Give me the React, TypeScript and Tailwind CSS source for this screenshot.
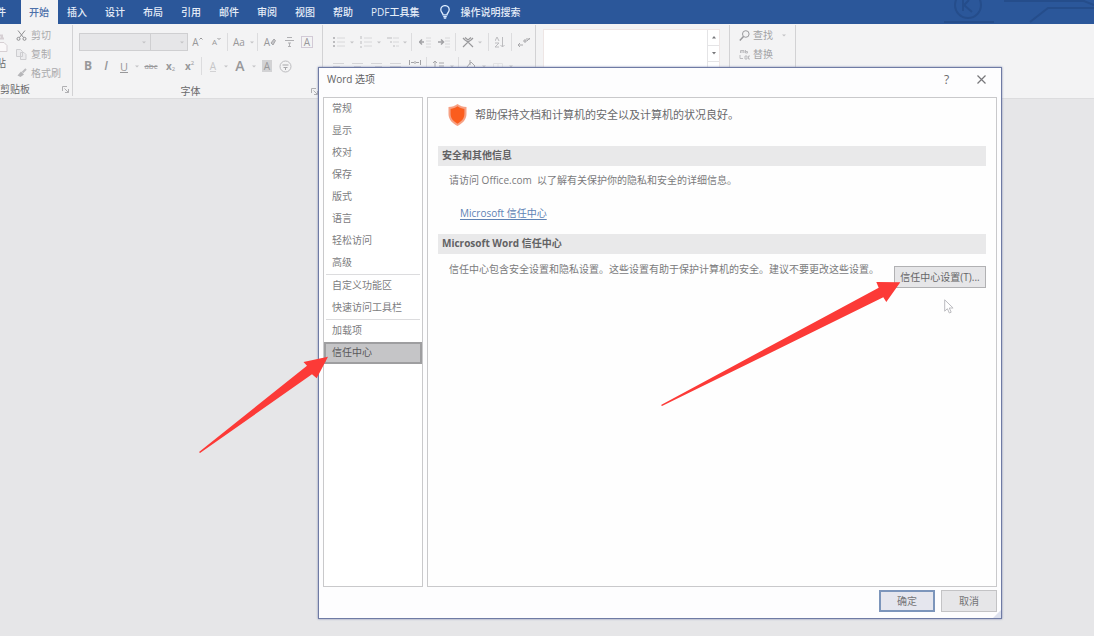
import { Fragment, type ReactNode } from "react";

const tabs = ["开始", "插入", "设计", "布局", "引用", "邮件", "审阅", "视图", "帮助", "PDF工具集"];

const categories = [
  ["常规", "显示", "校对", "保存", "版式", "语言", "轻松访问", "高级"],
  ["自定义功能区", "快速访问工具栏"],
  ["加载项", "信任中心"],
];

function Tool({ label, className = "w-[19px]", children }: { label: string; className?: string; children: ReactNode }) {
  return (
    <button type="button" aria-label={label} className={`flex h-[18px] shrink-0 items-center justify-center leading-none ${className}`}>
      {children}
    </button>
  );
}

function Caret({ className = "w-2" }: { className?: string }) {
  return (
    <span className={`flex h-[18px] shrink-0 items-center justify-center ${className}`}>
      <svg width="4" height="3" viewBox="0 0 4 3" fill="#c4c4c6"><path d="M0 .5h4L2 2.500z" /></svg>
    </span>
  );
}

function Rule({ className = "w-[5px]" }: { className?: string }) {
  return (
    <span className={`flex h-[18px] shrink-0 justify-center ${className}`}>
      <span className="w-px bg-[#dcdcde]" />
    </span>
  );
}

function Icon({ w = 12, h = 12, children }: { w?: number; h?: number; children: ReactNode }) {
  return (
    <svg width={w} height={h} viewBox={`0 0 ${w} ${h}`} fill="none" stroke="#bcbcbf" strokeWidth="1">
      {children}
    </svg>
  );
}

function TabBar() {
  return (
    <header className="relative flex h-6 items-stretch overflow-hidden bg-[#2b579a] text-[10px] font-medium text-[#e6edf8]">
      <svg className="absolute right-0 top-0" width="150" height="24" viewBox="0 0 150 24" fill="none" stroke="#254d8b" strokeWidth="2">
        <circle cx="24" cy="5" r="13" />
        <path d="M19 0v11M19 6l6-6M20 5l8 7M60 1h80l10 4M86 22l18-14h46M0 22h50" />
      </svg>
      <button type="button" className="-ml-1 w-[25px] pl-0 text-left">件</button>
      <nav className="flex">
        {tabs.map((tab, i) => (
          <button
            key={tab}
            type="button"
            className={i === 0 ? "bg-[#f3f3f4] pl-2 pr-[9px] text-[#4d70aa]" : "px-[9px]"}
          >
            {tab}
          </button>
        ))}
      </nav>
      <button type="button" className="ml-[11px] flex items-center gap-[9px]">
        <svg width="12" height="14" viewBox="0 0 12 14" fill="none" stroke="#dcecff" strokeWidth="1.3">
          <path d="M4 9.8C4 8 1.8 7.3 1.8 4.8a4.2 4.2 0 0 1 8.4 0C10.200 7.300 8 8 8 9.800zM4.200 11.600h3.600M4.800 13.200h2.400" />
        </svg>
        操作说明搜索
      </button>
    </header>
  );
}

function ClipboardGroup() {
  return (
    <section className="flex w-[73px] shrink-0 flex-col border-r border-[#d2d2d4]">
      <div className="flex h-[59px] pt-[1px]">
        <button type="button" aria-label="粘贴" className="-ml-1 flex w-5 flex-col items-start pt-2 text-[#6a6a6c]">
          <svg width="12" height="19" viewBox="0 0 12 19" fill="none" stroke="#d6cfd3">
            <path d="M2 4.500h6M2 1.500h4v3" strokeWidth="2" />
            <path d="M2 8.500h6l3 3v6H2" fill="#faf8f9" />
          </svg>
          <span className="mt-[2px] leading-4">贴</span>
        </button>
        <div className="flex flex-col text-[#aaaaac]">
          <button type="button" className="flex h-[19px] items-center gap-1">
            <Icon w={11} h={11}>
              <path d="M2 .5l5.500 7M9 .5L3.500 7.500" stroke="#8e8e91" />
              <circle cx="2.500" cy="8.800" r="1.500" stroke="#8e8e91" />
              <circle cx="8.500" cy="8.800" r="1.500" stroke="#8e8e91" />
            </Icon>
            剪切
          </button>
          <button type="button" className="flex h-[19px] items-center gap-1">
            <Icon w={11} h={11}>
              <path d="M.5.5h4l2 2v5h-6zM4.500 3.500h3.500l2 2v5h-5.500z" fill="#ebebed" stroke="#cdcdd0" />
            </Icon>
            复制
          </button>
          <button type="button" className="flex h-[18px] items-center gap-1">
            <Icon w={11} h={11}>
              <path d="M10 1L6.500 4.500" strokeWidth="2" />
              <path d="M5 3.500l3 3L4.500 9 1.500 7.500z" fill="#b6b6b9" stroke="none" />
            </Icon>
            格式刷
          </button>
        </div>
      </div>
      <div className="flex h-[14px] items-center justify-between pr-[3px] text-[#68686a]">
        剪贴板
        <Launcher />
      </div>
    </section>
  );
}

function Launcher() {
  return (
    <svg width="7" height="7" viewBox="0 0 7 7" fill="none" stroke="#b0b0b3">
      <path d="M.5 5V.5H5M2.500 2.500l4 4M6.500 3v3.500H3" />
    </svg>
  );
}

function FontGroup() {
  return (
    <section className="flex w-[250px] shrink-0 flex-col border-r border-[#d2d2d4] pl-[6px] pt-2 text-[#98989a]">
      <div className="flex items-center">
        <div className="relative flex">
          <select aria-label="字体" className="h-[18px] w-[72px] appearance-none border border-[#cfcfd1] bg-[#e6e6e8]" />
          <span className="absolute right-[3px]"><Caret /></span>
        </div>
        <div className="relative flex">
          <select aria-label="字号" className="h-[18px] w-[37px] appearance-none border border-l-0 border-[#cfcfd1] bg-[#e6e6e8]" />
          <span className="absolute right-[2px]"><Caret /></span>
        </div>
        <Tool label="增大字号">
          A<Icon w={4} h={10}><path d="M.5 2.500L2 1l1.500 1.500" stroke="#98989a" /></Icon>
        </Tool>
        <Tool label="减小字号">
          <span className="text-[8px]">A</span><Icon w={4} h={10}><path d="M.5 1L2 2.500 3.500 1" stroke="#98989a" /></Icon>
        </Tool>
        <Rule className="w-[3px]" />
        <Tool label="更改大小写" className="w-5">Aa</Tool>
        <Caret className="w-[6px]" />
        <Rule />
        <Tool label="清除格式" className="w-5">
          A<Icon w={6} h={8}><path d="M1 5l3-4 1.500 1.500L3 7z" fill="#c4c4c7" stroke="#a6a6a9" /></Icon>
        </Tool>
        <Tool label="拼音指南" className="w-[18px]">
          <Icon w={11} h={12}><path d="M1 4.500h9M3 1.500h5M4 7h3M5.500 7v3M4 10.500h3" stroke="#b0b0b3" /></Icon>
        </Tool>
        <Tool label="字符边框" className="w-[18px]">
          <span className="flex size-3 items-center justify-center border border-[#d2cad6]">A</span>
        </Tool>
      </div>
      <div className="mt-[6px] flex items-center">
        <Tool label="加粗" className="w-[18px] text-xs font-bold">B</Tool>
        <Tool label="倾斜" className="w-[18px] text-xs font-semibold italic">I</Tool>
        <Tool label="下划线" className="w-[18px] text-[11px] underline">U</Tool>
        <Caret />
        <Tool label="删除线" className="w-5 text-[8px] line-through">abc</Tool>
        <Tool label="下标"><b>x</b><span className="mt-[6px] text-[6px]">2</span></Tool>
        <Tool label="上标"><b>x</b><span className="mb-[6px] text-[6px]">2</span></Tool>
        <Rule />
        <Tool label="文本效果" className="w-[18px] text-[#c6c6c8]"><span className="border-b border-[#d2d2d4]">A</span></Tool>
        <Caret />
        <Tool label="字体颜色" className="w-5 text-sm font-semibold">A</Tool>
        <Caret />
        <Tool label="字符底纹" className="w-[18px]"><span className="bg-[#d2d2d4] px-[2px] py-px">A</span></Tool>
        <Tool label="带圈字符">
          <Icon w={13} h={13}><circle cx="6.500" cy="6.500" r="5.500" /><path d="M3.500 5h6M4.500 7.500h4M6.500 7.500v2.500" stroke="#a6a6a9" /></Icon>
        </Tool>
      </div>
      <div className="mt-[9px] flex h-[14px] items-center justify-between pr-1">
        <span className="w-[7px]" />
        <span className="-ml-4 text-[#68686a]">字体</span>
        <Launcher />
      </div>
    </section>
  );
}

function ParagraphGroup() {
  const align = [
    ["左对齐", "M0 1.500h11M0 4.500h7M0 7.500h11"],
    ["居中", "M0 1.500h11M2 4.500h7M0 7.500h11"],
    ["右对齐", "M0 1.500h11M4 4.500h7M0 7.500h11"],
    ["两端对齐", "M0 1.500h11M0 4.500h11M0 7.500h11"],
  ];
  return (
    <section className="flex w-[213px] shrink-0 flex-col border-r border-[#d2d2d4] pl-[6px] pt-2">
      <div className="flex items-center">
        <Tool label="项目符号"><Icon><path d="M0 2h2M0 6h2M0 10h2" strokeWidth="2" /><path d="M4 2h8M4 6h8M4 10h8" stroke="#d8d8da" /></Icon></Tool>
        <Caret />
        <Tool label="编号"><Icon><path d="M1 0v3M1 5v3M1 10v2" /><path d="M4 2h8M4 6h8M4 10h8" stroke="#d8d8da" /></Icon></Tool>
        <Caret />
        <Tool label="多级列表"><Icon><path d="M0 2h5M3 6h2M6 10h2" /><path d="M6 2h6M6 6h6M9 10h3" stroke="#d8d8da" /></Icon></Tool>
        <Caret className="w-[6px]" />
        <Rule className="w-[7px]" />
        <Tool label="减少缩进量"><Icon><path d="M0 6h5M3 3.500L.5 6 3 8.500" stroke="#a2a2a5" strokeWidth="1.500" /><path d="M7 2h5M7 5h5M7 8h5M7 11h5" stroke="#d8d8da" /></Icon></Tool>
        <Tool label="增加缩进量"><Icon><path d="M0 6h5M3 3.500L5.500 6 3 8.500" stroke="#a2a2a5" strokeWidth="1.500" /><path d="M7 2h5M7 5h5M7 8h5M7 11h5" stroke="#d8d8da" /></Icon></Tool>
        <Rule />
        <Tool label="中文版式"><Icon><path d="M1 11l5-5 5 5M3 4L1 2M9 4l2-2M3 1.500L6 4l3-2.500M3 4l3 2 3-2" stroke="#98989b" strokeWidth="1.200" /></Icon></Tool>
        <Caret className="w-[6px]" />
        <Rule className="w-[11px]" />
        <Tool label="排序" className="w-3"><Icon w={10}><path d="M0 5L2 1l2 4M0 7h4L0 11h4M7.500 1v10M5.500 9l2 2 2-2" /></Icon></Tool>
        <Rule className="w-[10px]" />
        <Tool label="显示编辑标记" className="w-4"><Icon><path d="M0 9h5M2 7L0 9l2 2M5 5h4M7 3v4M9 5l3-3M8 3h4" stroke="#a8a8ab" /></Icon></Tool>
      </div>
      <div className="mt-[6px] flex items-center">
        {align.map(([label, d]) => (
          <Tool key={label} label={label}><Icon h={9}><path d={d} stroke="#d4d4d7" /></Icon></Tool>
        ))}
        <Tool label="分散对齐"><Icon h={12}><path d="M.5 0v5M11.500 0v5M2 2.500h3M7 2.500h3M6 1v3M0 8h11" stroke="#a2a2a5" /></Icon></Tool>
        <Rule />
        <Tool label="行距"><Icon><path d="M2 1v10M0 3l2-2 2 2M6 3h5M6 6h5" stroke="#a8a8ab" /></Icon></Tool>
        <Caret />
        <Rule />
        <Tool label="底纹"><Icon><path d="M2 7l4-5 4 4-4 4zM5 0v5" stroke="#a8a8ab" /></Icon></Tool>
        <Caret />
        <Tool label="边框"><Icon><path d="M1.500 3.500h9v7h-9zM6 3v8" stroke="#e2e2e4" /></Icon></Tool>
        <Caret />
      </div>
    </section>
  );
}

function StylesGroup() {
  return (
    <section className="flex w-[194px] shrink-0 border-r border-[#d2d2d4] pl-[7px] pr-[9px] pt-1">
      <div className="flex flex-1 border border-[#eee6e5] bg-white">
        <div className="flex-1" />
        <div className="flex w-3 flex-col border-l border-[#e4e4e6]">
          <button type="button" aria-label="上一行" className="flex h-4 items-center justify-center border-b border-[#e4e4e6]">
            <svg width="4" height="3" viewBox="0 0 4 3" fill="#77777a"><path d="M0 2.500h4L2 0z" /></svg>
          </button>
          <button type="button" aria-label="下一行" className="flex h-4 items-center justify-center border-b border-[#e4e4e6]">
            <svg width="4" height="3" viewBox="0 0 4 3" fill="#77777a"><path d="M0 0h4L2 2.500z" /></svg>
          </button>
        </div>
      </div>
    </section>
  );
}

function EditingGroup() {
  return (
    <section className="flex w-[66px] shrink-0 flex-col border-r border-[#d2d2d4] pl-[9px] pt-px text-[#a2a2a4]">
      <button type="button" className="flex h-[19px] items-center gap-[3px]">
        <Icon w={11} h={11}><circle cx="6.800" cy="4" r="3.300" stroke="#99999c" /><path d="M4.500 6.500L.8 10.500" stroke="#99999c" strokeWidth="1.500" /></Icon>
        查找
        <Caret className="ml-1 w-2" />
      </button>
      <button type="button" className="flex h-[19px] items-center gap-[3px]">
        <Icon w={11} h={11}><path d="M1.500 4V1.500H5V4M1.500 3H5M6.500 1v3h2V2.500h-2M1 6v3.500h3M6 7h2v3H6zM11 7H9.500v3H11" /></Icon>
        替换
      </button>
    </section>
  );
}

function SectionTitle({ children }: { children: ReactNode }) {
  return <h2 className="flex h-5 items-center bg-[#e9e9ea] pb-px pl-1 text-[10px] font-bold text-[#626264]">{children}</h2>;
}

function OptionsDialog() {
  return (
    <div
      role="dialog"
      aria-labelledby="dialog-title"
      className="absolute bottom-[17px] left-[318px] right-[92px] top-[67px] flex flex-col border border-[#6f7ba4] bg-[#fdfdfe] px-1 pb-[6px] shadow-[0_0_2px_#7f8ab0]"
    >
      <div className="flex h-[29px] shrink-0 items-center pb-[6px] pl-1">
        <h1 id="dialog-title" className="flex-1 text-[10px] text-[#626264]">Word 选项</h1>
        <button type="button" aria-label="帮助" className="w-[37px] text-xs text-[#6a6a6c]">?</button>
        <button type="button" aria-label="关闭" className="flex w-8 justify-center">
          <svg width="9" height="9" viewBox="0 0 9 9" stroke="#77777b" strokeWidth="1.200"><path d="M.5.5l8 8M8.500.5l-8 8" /></svg>
        </button>
      </div>

      <div className="flex min-h-0 flex-1 gap-1">
        <nav className="flex w-[100px] shrink-0 flex-col border border-[#c9c9cb] bg-white">
          {categories.map((group, i) => (
            <Fragment key={group[0]}>
              {i > 0 && <hr className="mx-[2px] border-[#dcdcde]" />}
              {group.map((name) => (
                <button
                  key={name}
                  type="button"
                  className={
                    name === "信任中心"
                      ? "h-[22px] border-2 border-[#9e9ea0] bg-[#c5c5c7] pb-px pl-[6px] text-left text-[#58585a]"
                      : "h-[22px] pb-px pl-2 text-left text-[#7c7c7e]"
                  }
                >
                  {name}
                </button>
              ))}
            </Fragment>
          ))}
        </nav>

        <main className="min-w-0 flex-1 border border-[#c9c9cb] bg-[#fefefe] px-[10px] text-[#7a7a7c]">
          <div className="flex h-12 items-center gap-2 pb-[14px] pl-[10px] text-[11px] text-[#69696b]">
            <svg width="19" height="22" viewBox="0 0 19 22">
              <path d="M9.500 0C7 2 4 3 .5 3v7c0 5.500 4 9.500 9 12 5-2.500 9-6.500 9-12V3C15 3 12 2 9.500 0z" fill="#f6a184" />
              <path d="M9.500 2.300C7.500 3.800 5.200 4.700 2.600 4.900V10c0 4.300 2.900 7.500 6.900 9.700 4-2.200 6.900-5.400 6.900-9.700V4.900C13.800 4.700 11.500 3.800 9.500 2.300z" fill="#fb5d1d" />
            </svg>
            <p>帮助保持文档和计算机的安全以及计算机的状况良好。</p>
          </div>
          <SectionTitle>安全和其他信息</SectionTitle>
          <p className="pl-[11px] pt-[6px] leading-4">请访问 Office.com&nbsp; 以了解有关保护你的隐私和安全的详细信息。</p>
          <p className="pb-[13px] pl-[22px] pt-[17px] leading-4">
            <a href="#trust-center" className="text-[#5f82b4] underline underline-offset-2">Microsoft 信任中心</a>
          </p>
          <SectionTitle>Microsoft Word 信任中心</SectionTitle>
          <div className="flex justify-between pl-[11px]">
            <p className="pt-[7px] leading-4">信任中心包含安全设置和隐私设置。这些设置有助于保护计算机的安全。建议不要更改这些设置。</p>
            <button type="button" className="mt-3 h-[22px] w-[92px] shrink-0 border border-[#b1b1b3] bg-[#e6e6e8] text-[#656567]">
              信任中心设置(T)...
            </button>
          </div>
        </main>
      </div>

      <div className="flex shrink-0 justify-end gap-[6px] pt-[3px]">
        <button type="button" className="h-[22px] w-14 border-2 border-[#7c95bb] bg-[#e5e6ee] text-[#747477]">确定</button>
        <button type="button" className="h-[22px] w-14 border border-[#c3c3c5] bg-[#e6e6e8] text-[#747477]">取消</button>
      </div>
      <svg className="absolute bottom-0 right-0" width="8" height="8" viewBox="0 0 8 8" fill="#dde1ee"><path d="M8 0v8H0z" /></svg>
    </div>
  );
}

export default function App() {
  return (
    <div className="relative min-h-screen overflow-hidden bg-[#e6e6e8] font-['Open_Sans','Noto_Sans_CJK_SC',sans-serif] text-[10px]">
      <TabBar />
      <div className="flex h-[75px] border-b border-[#dcdcde] bg-[#f3f3f4] pb-[2px] pt-[1px]">
        <ClipboardGroup />
        <FontGroup />
        <ParagraphGroup />
        <StylesGroup />
        <EditingGroup />
      </div>
      <OptionsDialog />
      <svg className="pointer-events-none absolute left-[199px] top-[356px]" width="130" height="98" viewBox="0 0 130 98" fill="#fc3a37">
        <path d="M0 96L108 9.700 104.500 6 129 .7 117.700 22.300 113 18.300 1 97z" />
      </svg>
      <svg className="pointer-events-none absolute right-[193px] top-[281px]" width="240" height="126" viewBox="0 0 240 126" fill="#fc3a37">
        <path d="M0 124L217.700 6.700 215.300 1 239.300 1.300 225.300 21 222.300 16.300 1 125z" />
      </svg>
      <svg className="pointer-events-none absolute right-[140px] top-[299px]" width="10" height="15" viewBox="0 0 10 15" fill="#fff" stroke="#bcbcc0">
        <path d="M.7.8v11.400l2.700-2.500 1.900 4.300 1.900-.8-1.900-4.200h3.800z" />
      </svg>
    </div>
  );
}
